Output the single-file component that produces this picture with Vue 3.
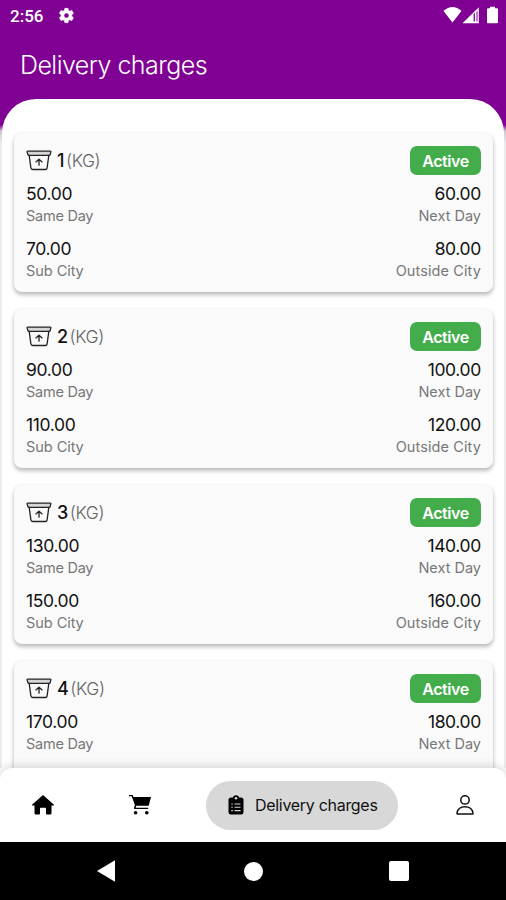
<script setup>
const charges = [
  { weight: 1, same: '50.00', next: '60.00', sub: '70.00', outside: '80.00' },
  { weight: 2, same: '90.00', next: '100.00', sub: '110.00', outside: '120.00' },
  { weight: 3, same: '130.00', next: '140.00', sub: '150.00', outside: '160.00' },
  { weight: 4, same: '170.00', next: '180.00' },
]
</script>

<template>
  <div class="screen">
    <header class="top">
      <div class="status">
        <span class="time">2:56</span>
        <svg class="gear" viewBox="0 0 24 24"><path fill="#fff" fill-rule="evenodd" stroke="#fff" stroke-width=".8" d="M19.400 13a7.500 7.500 0 0 0 0-2l2.200-1.700c.2-.2.300-.4.100-.7l-2-3.500c-.1-.2-.4-.3-.6-.2l-2.600 1a7.300 7.300 0 0 0-1.700-1L14.400 2.300a.5.5 0 0 0-.5-.4h-4c-.3 0-.5.200-.5.400L9 4.900c-.6.300-1.200.6-1.700 1l-2.600-1c-.2-.1-.5 0-.6.200l-2 3.500c-.1.200 0 .5.100.7L4.400 11a7.500 7.500 0 0 0 0 2l-2.200 1.700c-.2.200-.2.400-.1.700l2 3.500c.1.200.4.300.6.200l2.600-1c.5.400 1.100.7 1.700 1l.4 2.600c0 .2.200.4.500.4h4c.3 0 .5-.2.500-.4l.4-2.600c.6-.3 1.200-.6 1.700-1l2.600 1c.2.100.5 0 .6-.2l2-3.500c.1-.2.100-.5-.1-.7zM12 8.400a3.600 3.600 0 1 1 0 7.200 3.600 3.600 0 0 1 0-7.200z" /></svg>
        <svg class="signals" viewBox="0 0 56 18">
          <path fill="#fff" d="M1.500 5Q10.500-3 19.500 5L10.500 16.500z" />
          <path fill="#fff" fill-rule="evenodd" d="M20.500 17.300L36.800 1.300v16zM31.600 7.800v7.700h1.300V6.600zM34.500 6v9.500h1V5z" />
          <path fill="#fff" d="M45 3.300q0-1 1-1h2V.7h5v1.600h2q1 0 1 1v13q0 1-1 1h-9q-1 0-1-1z" />
        </svg>
      </div>
      <h1 class="title">Delivery charges</h1>
    </header>

    <div class="backdrop">
      <main class="sheet">
        <article v-for="c in charges" :key="c.weight" class="card">
          <div class="head">
            <svg class="box" viewBox="0 0 26 21" fill="none" stroke="#222" stroke-width="1.300" stroke-linejoin="round" stroke-linecap="round">
              <path d="M1.600 1.200h22.800q.7 0 .5.700l-.9 2.900q-.1.600-.8.600H2.800q-.7 0-.8-.6L1.100 1.900q-.2-.7.500-.7z" fill="#d6d6d6" />
              <path d="M3.200 5.500L4.900 17.900q.2 1.600 1.800 1.600h12.600q1.600 0 1.800-1.600L22.800 5.500" />
              <path d="M13 15.200V9.400M9.900 11.900L13 9.200l3.100 2.700" />
            </svg>
            <span class="weight">{{ c.weight }}</span><span class="unit">(KG)</span>
            <span class="badge">Active</span>
          </div>
          <div class="pair">
            <div class="cell"><b>{{ c.same }}</b><small class="same">Same Day</small></div>
            <div class="cell end"><b>{{ c.next }}</b><small class="next">Next Day</small></div>
          </div>
          <div v-if="c.sub" class="pair">
            <div class="cell"><b>{{ c.sub }}</b><small class="sub">Sub City</small></div>
            <div class="cell end"><b>{{ c.outside }}</b><small class="outside">Outside City</small></div>
          </div>
        </article>
      </main>
    </div>

    <nav class="tabs">
      <svg class="home" viewBox="0 0 22 20"><path d="M11 0L22 9.700q.3.900-.6.900h-1.900v7.600q0 1.300-1.300 1.300h-3.300q-.9 0-.9-.9v-5.100q0-.8-.8-.8H8.800q-.8 0-.8.8v5.100q0 .9-.9.900H3.800q-1.300 0-1.300-1.300v-7.600H.6q-.9 0-.6-.9z" /></svg>
      <svg class="cart" viewBox="0 0 22 20">
        <path d="M0 0h3.600l.9 2H22l-2.300 8.700H7.300l-.7 2h12.600V14H5.900q-1.400 0-.9-1.300l.9-2.600L2.700 1.300H0z" />
        <circle cx="6.600" cy="17.700" r="1.800" /><circle cx="17.800" cy="17.700" r="1.800" />
      </svg>
      <div class="current">
        <svg viewBox="0 0 16 20">
          <path d="M3 2.500h2C5.300-.5 10.700-.5 11 2.500h2q2.500 0 2.500 2.500v12.300q0 2.200-2.200 2.200H2.700Q.5 19.500.5 17.300V5Q.5 2.500 3 2.500z" />
          <circle cx="8" cy="3.200" r="1.300" fill="#d8d8d8" />
          <path d="M3.300 9h1.500m1.700 0h6M3.300 12.300h1.500m1.700 0h6M3.300 15.600h1.500m1.700 0h6" stroke="#d8d8d8" stroke-width="1.100" />
        </svg>
        <span>Delivery charges</span>
      </div>
      <svg class="person" viewBox="0 0 18 20" fill="none" stroke="#111" stroke-width="1.500">
        <circle cx="9" cy="4.900" r="4.200" />
        <path d="M1.900 19q-1.100 0-.9-1.200C1.900 13.600 5 11.800 9 11.800s7.100 1.800 8 6q.2 1.200-.9 1.200z" stroke-linejoin="round" />
      </svg>
    </nav>

    <footer class="system">
      <svg class="back" viewBox="0 0 18 22"><path fill="#fff" d="M0 11L18 .3v21.400z" /></svg>
      <i class="dot"></i>
      <i class="square"></i>
    </footer>
  </div>
</template>

<style>
body { margin: 0; overflow: hidden; }
</style>

<style scoped>
.screen {
  width: 506px;
  height: 900px;
  display: flex;
  flex-direction: column;
  overflow: hidden;
  background: #fff;
  font-family: Inter, "Liberation Sans", sans-serif;
  color: #111;
}
.top { height: 99px; flex: none; background: #800094; color: #fff; }
.status { height: 32px; display: flex; align-items: center; padding: 0 8px 0 10px; }
.time { font: 500 17px/32px Roboto, sans-serif; width: 48px; }
.gear { width: 17px; height: 17px; margin-top: -1px; }
.signals { width: 56px; height: 18px; margin-left: auto; margin-top: -2px; }
.title { margin: 0 0 0 20px; font-size: 25px; line-height: 66px; font-weight: 350; letter-spacing: -0.55px; white-space: nowrap; }
.backdrop {
  height: 669px;
  flex: none;
  box-sizing: border-box;
  padding: 0 2px;
  overflow: hidden;
  background: linear-gradient(#800094 0 26px, #cfc5d1 32px, #ececee 44px);
}
.sheet {
  height: 669px;
  box-sizing: border-box;
  padding: 34px 11px 0 12px;
  display: flex;
  flex-direction: column;
  gap: 17px;
  overflow: hidden;
  background: #fff;
  border-radius: 34px 34px 0 0;
}
.card {
  height: 159px;
  flex: none;
  box-sizing: border-box;
  padding: 12px 12px 0;
  border-radius: 8px;
  background: #fafafa;
  box-shadow: 0 3px 4px rgba(0, 0, 0, .25), 0 0 4px rgba(0, 0, 0, .06);
}
.head { height: 31px; margin-bottom: 5px; display: flex; align-items: center; }
.box { width: 26px; height: 21px; margin-right: 5px; }
.weight { font-size: 18px; font-weight: 550; line-height: 31px; }
.unit { font-size: 17.5px; font-weight: 350; color: #666; letter-spacing: -0.4px; margin-left: 1.5px; }
.badge {
  width: 71px;
  height: 29px;
  margin-left: auto;
  border-radius: 7px;
  background: #43ad4b;
  color: #fff;
  font-size: 16px;
  line-height: 30px;
  font-weight: 600;
  letter-spacing: -0.4px;
  text-align: center;
}
.pair { height: 55px; display: flex; justify-content: space-between; }
.cell { display: flex; flex-direction: column; white-space: nowrap; }
.end { align-items: flex-end; }
.cell b { font-size: 17.5px; line-height: 24px; padding-top: 1px; font-weight: 400; letter-spacing: -0.35px; }
.cell small { font-size: 14.5px; line-height: 20px; color: #777; font-weight: 400; letter-spacing: -0.25px; }
.cell .next { letter-spacing: 0; }
.cell .sub { letter-spacing: -0.05px; }
.cell .outside { letter-spacing: 0.1px; }
.tabs {
  height: 74px;
  flex: none;
  box-sizing: border-box;
  padding: 0 32px;
  display: flex;
  align-items: center;
  position: relative;
  background: #fff;
  border-radius: 12px 12px 0 0;
  box-shadow: 0 -2px 10px rgba(0, 0, 0, .16);
}
.home { width: 22px; height: 20px; }
.cart { width: 22px; height: 20px; margin-left: 75px; }
.current {
  width: 192px;
  height: 49px;
  box-sizing: border-box;
  margin-left: 55px;
  padding-left: 22px;
  display: flex;
  align-items: center;
  border-radius: 25px;
  background: #d8d8d8;
  font-size: 16px;
  letter-spacing: -0.3px;
  white-space: nowrap;
}
.current svg { width: 16px; height: 20px; margin-right: 11px; }
.person { width: 18px; height: 20px; margin-left: auto; margin-right: 0; }
.system {
  height: 58px;
  flex: none;
  position: relative;
  box-sizing: border-box;
  padding: 0 97px;
  display: flex;
  align-items: center;
  background: #000;
}
.back { width: 18px; height: 22px; }
.dot { width: 19px; height: 19px; margin-left: 129px; border-radius: 50%; background: #fff; }
.square { width: 20px; height: 20px; margin-left: auto; border-radius: 2px; background: #fff; }
</style>
